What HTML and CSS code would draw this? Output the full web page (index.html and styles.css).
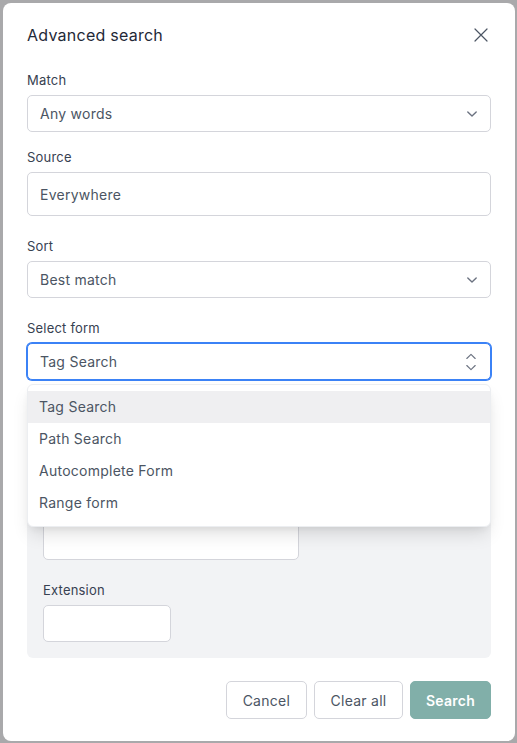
FILE: index.html
```html
<!DOCTYPE html>
<html lang="en">
<head>
<meta charset="utf-8">
<title>Advanced search</title>
<link rel="stylesheet" href="styles.css">
</head>
<body>
<div class="modal">
  <div class="modal-header">
    <h2 class="modal-title">Advanced search</h2>
    <button class="close-btn" aria-label="Close">
      <svg width="14" height="14" viewBox="0 0 14 14"><path d="M1 1L13 13M13 1L1 13" stroke="#4b5563" stroke-width="1.2" fill="none" stroke-linecap="round"/></svg>
    </button>
  </div>
  <div class="form">
    <div class="field field-first">
      <label class="label">Match</label>
      <div class="control select">
        <span class="value">Any words</span>
        <svg class="chev" width="12" height="8" viewBox="0 0 12 8"><path d="M1.8 2L6 6L10.2 2" stroke="#6b7280" stroke-width="1.4" fill="none" stroke-linecap="round" stroke-linejoin="round"/></svg>
      </div>
    </div>
    <div class="field">
      <label class="label">Source</label>
      <div class="control input-tall">
        <span class="value">Everywhere</span>
      </div>
    </div>
    <div class="field">
      <label class="label">Sort</label>
      <div class="control select">
        <span class="value">Best match</span>
        <svg class="chev" width="12" height="8" viewBox="0 0 12 8"><path d="M1.8 2L6 6L10.2 2" stroke="#6b7280" stroke-width="1.4" fill="none" stroke-linecap="round" stroke-linejoin="round"/></svg>
      </div>
    </div>
    <div class="field field-menu">
      <label class="label">Select form</label>
      <div class="control select focused">
        <span class="value">Tag Search</span>
        <svg class="updown" width="14" height="22" viewBox="0 0 14 22"><path d="M2.8 7.5L7 3.3L11.2 7.5M2.8 14.5L7 18.7L11.2 14.5" stroke="#6b7280" stroke-width="1.1" fill="none" stroke-linecap="round" stroke-linejoin="round"/></svg>
      </div>
      <ul class="menu">
        <li class="menu-item active">Tag Search</li>
        <li class="menu-item">Path Search</li>
        <li class="menu-item">Autocomplete Form</li>
        <li class="menu-item">Range form</li>
      </ul>
    </div>
    <div class="panel">
      <div class="field tag-field">
        <div class="control tag-box"></div>
      </div>
      <div class="field field-last">
        <label class="label">Extension</label>
        <div class="control ext-box"></div>
      </div>
    </div>
  </div>
  <div class="footer">
    <button class="btn btn-outline btn-cancel">Cancel</button>
    <button class="btn btn-outline btn-clear">Clear all</button>
    <button class="btn btn-primary">Search</button>
  </div>
</div>
</body>
</html>
```

FILE: styles.css
```css
* { box-sizing: border-box; }
html, body { margin: 0; height: 100%; }
body {
  background: #a9a9ab;
  padding: 3px 2px 2px 3px;
  font-family: Inter, "Noto Sans", sans-serif;
}
.modal {
  width: 512px;
  height: 738px;
  background: #ffffff;
  border-radius: 8px;
  padding: 20px 24px 22px 24px;
  display: flex;
  flex-direction: column;
}
.modal-header {
  height: 24px;
  display: flex;
  align-items: center;
  justify-content: space-between;
}
.modal-title {
  margin: 0;
  font-size: 16px;
  line-height: 24px;
  font-weight: 400;
  color: #1f2937;
  letter-spacing: 0.25px;
}
.close-btn {
  border: 0;
  background: none;
  padding: 0;
  margin-right: 3px;
  width: 14px;
  height: 14px;
  display: flex;
}
.form {
  margin-top: 23px;
  display: flex;
  flex-direction: column;
}
.field {
  display: flex;
  flex-direction: column;
  margin-top: 20px;
}
.field-first { margin-top: 0; }
.field-first + .field { margin-top: 15px; }
.label {
  font-size: 13px;
  line-height: 20px;
  color: #374151;
  margin-bottom: 5px;
  letter-spacing: 0.2px;
}
.control {
  border: 1px solid #d4d5db;
  border-radius: 5px;
  background: #fff;
  display: flex;
  align-items: center;
  justify-content: space-between;
  padding: 0 12px 0 12px;
}
.select { height: 37px; }
.input-tall { height: 44px; }
.value {
  font-size: 14px;
  color: #4b5563;
  letter-spacing: 0.25px;
}
.focused {
  border-color: #3b82f6;
  box-shadow: 0 0 0 1px #3b82f6;
}
.field-menu { position: relative; }
.menu {
  position: absolute;
  top: 66px;
  left: 0;
  right: 0;
  margin: 0;
  padding: 6px 0 7px;
  list-style: none;
  background: #fff;
  border: 1px solid #eceef1;
  border-radius: 6px;
  box-shadow: 0 10px 18px -3px rgba(0,0,0,0.12), 0 4px 8px -4px rgba(0,0,0,0.1);
  z-index: 5;
}
.menu-item {
  height: 32px;
  line-height: 32px;
  padding: 0 11px;
  font-size: 14px;
  color: #4b5563;
  letter-spacing: 0.25px;
}
.menu-item.active { background: #efeff1; }
.panel {
  margin-top: 20px;
  background: #f2f3f5;
  border-radius: 6px;
  padding: 16px;
  display: flex;
  flex-direction: column;
}
.panel .field:first-child { margin-top: 0; }
.tag-field { padding-top: 25px; }
.tag-box { width: 256px; height: 119px; }
.ext-box { width: 128px; height: 37px; }
.footer {
  margin-top: 23px;
  display: flex;
  justify-content: flex-end;
  gap: 7px;
}
.btn {
  height: 38px;
  border-radius: 5px;
  font-family: Inter, "Noto Sans", sans-serif;
  font-size: 14px;
  letter-spacing: 0.25px;
  padding: 0 16px;
}
.btn-outline {
  background: #fff;
  border: 1px solid #d4d5db;
  color: #4b5563;
}
.btn-clear { padding: 0 15.5px; }
.btn-primary {
  background: #81afa9;
  border: 1px solid #81afa9;
  color: #fff;
  font-weight: 600;
  padding: 0 15px;
}
```
